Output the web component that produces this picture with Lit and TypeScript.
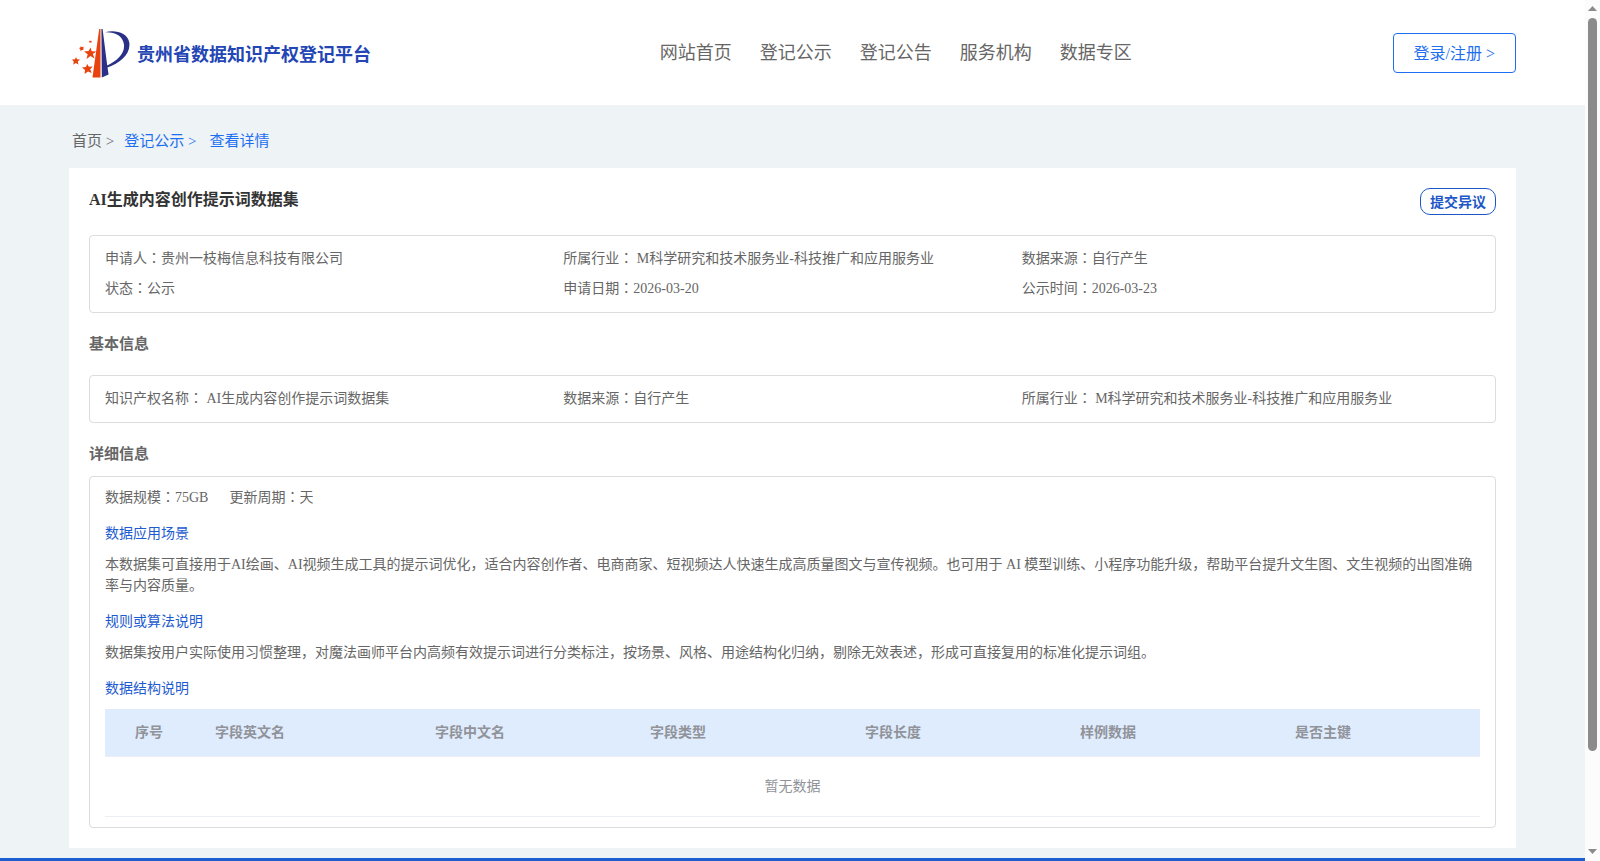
import { LitElement, html, css } from "lit";
import { customElement } from "lit/decorators.js";

interface Field {
  label: string;
  value: string;
}

const NAV = ["网站首页", "登记公示", "登记公告", "服务机构", "数据专区"];

const SUMMARY: Field[] = [
  { label: "申请人", value: "贵州一枝梅信息科技有限公司" },
  { label: "所属行业", value: " M科学研究和技术服务业-科技推广和应用服务业" },
  { label: "数据来源", value: "自行产生" },
  { label: "状态", value: "公示" },
  { label: "申请日期", value: "2026-03-20" },
  { label: "公示时间", value: "2026-03-23" },
];

const BASIC: Field[] = [
  { label: "知识产权名称", value: " AI生成内容创作提示词数据集" },
  { label: "数据来源", value: "自行产生" },
  { label: "所属行业", value: " M科学研究和技术服务业-科技推广和应用服务业" },
];

const COLUMNS = ["序号", "字段英文名", "字段中文名", "字段类型", "字段长度", "样例数据", "是否主键"];

// The colon sits in the middle of its cell, as the Japanese cut draws it.
const colonStyles = css`
  .colon { font-family: "Noto Sans CJK JP", sans-serif; line-height: 1; }
`;
const colon = html`<span class="colon" lang="ja">：</span>`;

@customElement("site-logo")
class SiteLogo extends LitElement {
  static styles = css`
    :host { display: block; }
    .link {
      display: flex;
      align-items: center;
      gap: 7px;
      color: #2346b4;
      font-size: 18px;
      font-weight: bold;
      line-height: 24px;
      text-decoration: none;
      white-space: nowrap;
    }
    .mark { display: block; width: 58px; height: 50px; }
    .name { padding-top: 5px; }
  `;

  render() {
    return html`
      <a class="link" href="#home">
        <svg class="mark" viewBox="0 0 58 50" aria-hidden="true">
          <path fill="#e8430f" d="M27.200 1h1.300v48.500h-8z" />
          <path fill="#2a3087" d="M29.400 1h1.200l4.600 36.500C45 33 53 26 52 16.500C51 8 43 3.800 33 4.300C43 1.500 55.500 4.500 57.300 14.500C59 26 48 35.500 35.500 39.600L36.600 46.500L29.800 49.500z" />
          <g fill="#e8430f">
            <path d="M18.500 19.500l1.200 3.800 4.600.1-3.500 2.600 1.800 4.400-4.200-2.500-3.900 3 1.200-4.700-3.700-2.700 4.600-.5z" />
            <path d="M15.200 36l1.700 2.800 3.800-.4-2.500 2.800 1.500 3.800-3.700-1.400-3.400 2.400.4-4-3-2.500 3.900-.6z" />
            <path d="M4 29l1 2.300 3 .2-2.200 2 .6 2.900-2.600-1.400-2.600 1.700.6-3L0 31.500l3-.2z" />
            <path d="M8.500 18.200l1.300.8 2-.3-.5 1.600.4 1.500-1.600.1-1.500 1-.4-1.700-1.200-1.200 1.500-.5z" />
            <path d="M17.800 12.300l.8.600 1.200-.2-.4 1 .3.900-1.100 0-.9.400-.2-1-.7-.8.900-.1z" />
          </g>
        </svg>
        <span class="name">贵州省数据知识产权登记平台</span>
      </a>
    `;
  }
}

@customElement("field-grid")
class FieldGrid extends LitElement {
  static properties = { fields: { attribute: false } };
  declare fields: Field[];

  static styles = [
    colonStyles,
    css`
      :host { display: block; }
      .grid {
        display: grid;
        grid-template-columns: repeat(3, 1fr);
        margin: 0;
        padding: 8px 15px;
        border: 1px solid #dcdcdc;
        border-radius: 4px;
      }
      .item { display: flex; line-height: 30px; white-space: pre-wrap; }
      .label, .value { margin: 0; }
      .label { flex: none; }
    `,
  ];

  render() {
    return html`<dl class="grid">
      ${this.fields.map(
        (f) => html`<div class="item"><dt class="label">${f.label}${colon}</dt><dd class="value">${f.value}</dd></div>`
      )}
    </dl>`;
  }
}

@customElement("app-root")
class AppRoot extends LitElement {
  static styles = [
    colonStyles,
    css`
      :host {
        display: flex;
        height: 100vh;
        overflow: hidden;
        font-family: "Liberation Serif", "Noto Sans CJK SC", serif;
        font-size: 14px;
        line-height: 21px;
        color: #666;
        background: #eef3f6;
      }
      * { box-sizing: border-box; }
      a { color: inherit; text-decoration: none; }
      button { font-family: inherit; cursor: pointer; background: #fff; }
      .page { flex: 1; min-width: 0; overflow: hidden; }
      .header {
        display: flex;
        align-items: center;
        justify-content: space-between;
        height: 105px;
        padding: 0 69px;
        background: #fff;
      }
      .brand { padding: 0 28px 0 3px; }
      .nav { display: flex; gap: 28px; font-size: 18px; line-height: 24px; }
      .login {
        height: 40px;
        padding: 0 20px 2px;
        border: 1px solid #1e6ff0;
        border-radius: 4px;
        color: #1e6ff0;
        font-size: 16px;
      }
      .main { padding: 0 69px 10px; }
      .crumbs {
        display: flex;
        gap: 10px;
        padding: 25px 3px 16px;
        font-size: 15px;
        line-height: 22px;
      }
      .crumb { color: #1e6ff0; }
      .current { padding-left: 3px; }
      .card { padding: 20px; background: #fff; }
      .top { display: flex; justify-content: space-between; margin-bottom: 20px; }
      .title { margin: 0; color: #333; font-size: 16px; line-height: 24px; }
      .object {
        height: 27px;
        padding: 0 9px 2px;
        border: 1px solid #1d57c7;
        border-radius: 10px;
        color: #1d57c7;
        font-size: 14px;
        font-weight: bold;
      }
      .section { margin: 20px 0; font-size: 15px; line-height: 22px; }
      .section.tight { margin-bottom: 11px; }
      .detail { padding: 10px 15px; border: 1px solid #dcdcdc; border-radius: 4px; }
      .facts { display: flex; gap: 21px; }
      .sub { margin: 15px 0 10px; color: #1d5bd0; font-size: 14px; font-weight: normal; }
      .text { margin: 0; }
      .table { width: 100%; table-layout: fixed; border-collapse: separate; border-spacing: 0; color: #909399; }
      .table th {
        height: 48px;
        padding: 0 10px;
        border-bottom: 1px solid #ebeef5;
        background: #dfecfe;
        text-align: left;
      }
      .table th:first-child { padding-left: 30px; }
      .table td { height: 60px; padding: 0; border-bottom: 1px solid #ebeef5; text-align: center; }
      .c-index { width: 100px; }
      .c-name { width: 220px; }
      .c-field { width: 215px; }
      .c-key { width: 195px; }
      .footer { height: 120px; background: #1d5fd0; }

      .scroll {
        display: flex;
        flex: none;
        flex-direction: column;
        align-items: center;
        gap: 7px;
        width: 15px;
        padding: 6px 0 7px;
        background: #fcfcfc;
      }
      .arrow { flex: none; display: block; width: 9px; height: 5px; fill: #8b8b8b; }
      .track { flex: 1; width: 9px; }
      .thumb { height: 89%; border-radius: 5px; background: #8b8b8b; }
    `,
  ];

  render() {
    return html`
      <div class="page">
        <header class="header">
          <site-logo class="brand"></site-logo>
          <nav class="nav">${NAV.map((n) => html`<a href="#nav">${n}</a>`)}</nav>
          <button class="login" type="button">登录/注册 &gt;</button>
        </header>
        <main class="main">
          <nav class="crumbs">
            <a href="#home">首页 &gt;</a>
            <a class="crumb" href="#list">登记公示 &gt;</a>
            <a class="crumb current" href="#detail">查看详情</a>
          </nav>
          <article class="card">
            <div class="top">
              <h1 class="title">AI生成内容创作提示词数据集</h1>
              <button class="object" type="button">提交异议</button>
            </div>
            <field-grid .fields=${SUMMARY}></field-grid>
            <h2 class="section">基本信息</h2>
            <field-grid .fields=${BASIC}></field-grid>
            <h2 class="section tight">详细信息</h2>
            <section class="detail">
              <div class="facts"><span>数据规模${colon}75GB</span><span>更新周期${colon}天</span></div>
              <h3 class="sub">数据应用场景</h3>
              <p class="text">本数据集可直接用于AI绘画、AI视频生成工具的提示词优化，适合内容创作者、电商商家、短视频达人快速生成高质量图文与宣传视频。也可用于 AI 模型训练、小程序功能升级，帮助平台提升文生图、文生视频的出图准确率与内容质量。</p>
              <h3 class="sub">规则或算法说明</h3>
              <p class="text">数据集按用户实际使用习惯整理，对魔法画师平台内高频有效提示词进行分类标注，按场景、风格、用途结构化归纳，剔除无效表述，形成可直接复用的标准化提示词组。</p>
              <h3 class="sub">数据结构说明</h3>
              <table class="table">
                <colgroup>
                  <col class="c-index" /><col class="c-name" />
                  <col class="c-field" /><col class="c-field" /><col class="c-field" /><col class="c-field" />
                  <col class="c-key" />
                </colgroup>
                <thead><tr>${COLUMNS.map((c) => html`<th scope="col">${c}</th>`)}</tr></thead>
                <tbody><tr><td colspan="7">暂无数据</td></tr></tbody>
              </table>
            </section>
          </article>
        </main>
        <footer class="footer"></footer>
      </div>
      <div class="scroll" aria-hidden="true">
        <svg class="arrow" viewBox="0 0 9 5"><path d="M0 5L4.500 0L9 5z" /></svg>
        <div class="track"><div class="thumb"></div></div>
        <svg class="arrow" viewBox="0 0 9 5"><path d="M0 0L4.500 5L9 0z" /></svg>
      </div>
    `;
  }
}
